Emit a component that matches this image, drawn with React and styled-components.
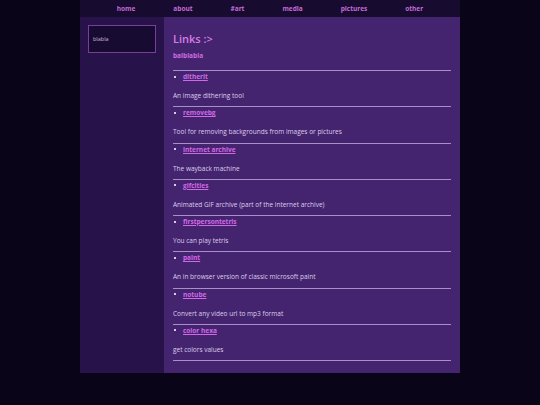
import styled, { createGlobalStyle } from 'styled-components';

const links = [
  {name: 'ditherit', desc: 'An image dithering tool'},
  {name: 'removebg', desc: 'Tool for removing backgrounds from images or pictures'},
  {name: 'internet archive', desc: 'The wayback machine'},
  {name: 'gifcities', desc: 'Animated GIF archive (part of the internet archive)'},
  {name: 'firstpersontetris', desc: 'You can play tetris'},
  {name: 'paint', desc: 'An in browser version of classic microsoft paint'},
  {name: 'notube', desc: 'Convert any video url to mp3 format'},
  {name: 'color hexa', desc: 'get colors values'},
];

const navItems = ['home', 'about', '#art', 'media', 'pictures', 'other'];

export default function App() {
  return (
    <>
      <GlobalStyle />
      <Page>
        <Nav>
          {navItems.map(item => (
            <NavLink key={item} href="#">
              {item}
            </NavLink>
          ))}
        </Nav>
        <Body>
          <Sidebar>
            <SideBox>blabla</SideBox>
          </Sidebar>
          <Main>
            <Heading>Links :&gt;</Heading>
            <Intro>balblabla</Intro>
            {links.map(link => (
              <Entry key={link.name}>
                <LinkRow>
                  <Bullet />
                  <ItemLink href="#">{link.name}</ItemLink>
                </LinkRow>
                <Desc>{link.desc}</Desc>
              </Entry>
            ))}
            <Rule />
          </Main>
        </Body>
      </Page>
    </>
  );
}

const GlobalStyle = createGlobalStyle`
  html, body {
    margin: 0;
    padding: 0;
    background: #0a0419;
    font-family: 'Open Sans', Lato, sans-serif;
  }
`;

const Page = styled.div`
  width: 380px;
  margin: 0 auto;
`;

const Nav = styled.nav`
  height: 17px;
  background: #170b30;
  display: flex;
  justify-content: center;
  align-items: center;
  gap: 38px;
`;

const NavLink = styled.a`
  color: #c56ad9;
  font-size: 6.5px;
  font-weight: 700;
  text-decoration: none;
`;

const Body = styled.div`
  display: grid;
  grid-template-columns: 84px 1fr;
  height: 356px;
`;

const Sidebar = styled.aside`
  background: #27134a;
  padding: 8px;
`;

const SideBox = styled.div`
  height: 26px;
  border: 1px solid #7a3d9e;
  background: #180b31;
  color: #c9b7da;
  font-size: 5.5px;
  display: flex;
  align-items: center;
  padding-left: 4px;
`;

const Main = styled.main`
  background: #44246f;
  padding: 15px 9px 0;
`;

const Heading = styled.h1`
  margin: 0;
  color: #d77ce6;
  font-size: 11px;
  font-weight: 600;
  line-height: 14px;
`;

const Intro = styled.p`
  margin: 5px 0 9px;
  color: #d06ae0;
  font-size: 6.5px;
  font-weight: 700;
  line-height: 10px;
`;

const Entry = styled.div`
  border-top: 1px solid #a78fcc;
  padding: 0.5px 0 6px;
`;

const LinkRow = styled.div`
  display: flex;
  align-items: center;
  height: 10px;
  padding-left: 1px;
`;

const Bullet = styled.span`
  width: 2px;
  height: 2px;
  background: #d9c9ec;
  margin-right: 7px;
`;

const ItemLink = styled.a`
  color: #d268e6;
  font-size: 6.5px;
  font-weight: 700;
  text-decoration: underline;
`;

const Desc = styled.p`
  margin: 10.5px 0 0;
  color: #dccdeb;
  font-size: 6.5px;
  line-height: 8.25px;
`;

const Rule = styled.div`
  border-top: 1px solid #a78fcc;
`;
